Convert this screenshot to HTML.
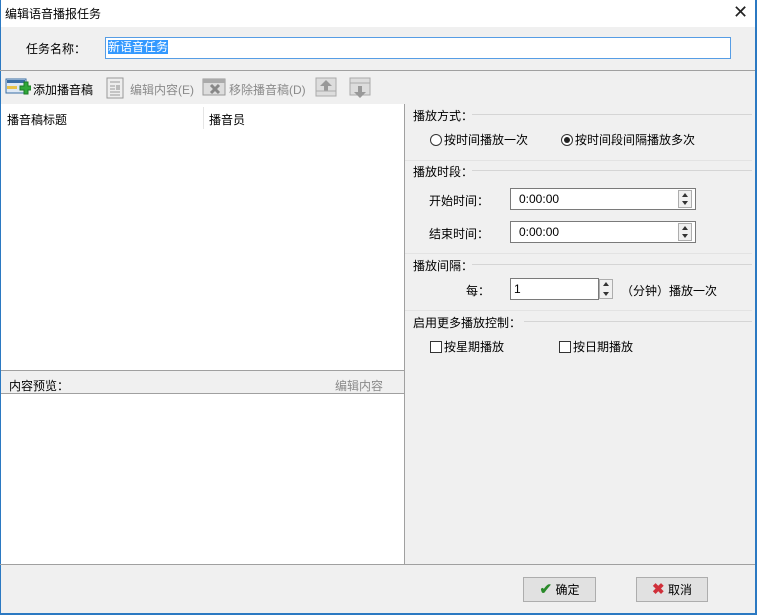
<!DOCTYPE html>
<html><head><meta charset="utf-8"><style>
*{margin:0;padding:0;box-sizing:border-box}
body{width:757px;height:615px;background:#f0f0f0;font-family:"Liberation Sans","Noto Sans CJK SC",sans-serif;font-size:12px;color:#000;position:relative;overflow:hidden}
.a{position:absolute;white-space:nowrap}
.ln{position:absolute;height:1px;background:#d5d5d5}
.inp{position:absolute;background:#fff;border:1px solid #7a7a7a;padding-left:8px;line-height:20px}
.spin{position:absolute;width:14px;border:1px solid #adadad;background:#f0f0f0}
.spin:before{content:"";position:absolute;left:3px;top:2px;border:3px solid transparent;border-bottom:4px solid #333;border-top:0}
.spin:after{content:"";position:absolute;left:3px;bottom:2px;border:3px solid transparent;border-top:4px solid #333;border-bottom:0}
.gray{color:#8a8a8a}
.rad{display:inline-block;width:12px;height:12px;border:1px solid #333;border-radius:50%;vertical-align:-2px;margin-right:2px;position:relative;background:#fff}
.chk{display:inline-block;width:12px;height:12px;border:1px solid #333;vertical-align:-2px;margin-right:2px;background:#fff}
.btn{position:absolute;border:1px solid #adadad;background:#e1e1e1;text-align:center;line-height:24px}
</style></head><body>
<div class="a" style="left:0;top:0;width:757px;height:27px;background:#fff"></div>
<div class="a" style="left:5px;top:5px">编辑语音播报任务</div>
<div class="a" style="left:733px;top:2px;font-size:18px;color:#222">✕</div>
<div class="a" style="left:0;top:0;width:1px;height:615px;background:#2b79c2"></div>
<div class="a" style="left:755px;top:0;width:2px;height:615px;background:#2b79c2"></div>
<div class="a" style="left:0;top:613px;width:757px;height:2px;background:#2b79c2"></div>
<div class="a" style="left:26px;top:40px">任务名称：</div>
<div class="inp" style="left:105px;top:37px;width:626px;height:22px;border-color:#569de5;padding-left:2px;line-height:19px"><span style="background:#3399ff;color:#fff">新语音任务</span></div>
<div class="a" style="left:0;top:70px;width:755px;height:1px;background:#a0a0a0"></div>
<svg class="a" style="left:5px;top:77px" width="26" height="22"><rect x="1" y="2" width="20" height="14" fill="#dfe9f5" stroke="#3a6ea5"/><rect x="2" y="3" width="18" height="3" fill="#3a6ea5"/><rect x="2" y="9" width="10" height="3" fill="#e8c34a"/><path d="M15 9h4v-4h4v4h3v4h-3v4h-4v-4h-4z" fill="#2fa83a" stroke="#1b7a25"/></svg>
<div class="a" style="left:33px;top:81px">添加播音稿</div>
<svg class="a" style="left:106px;top:77px" width="18" height="22"><rect x="1" y="1" width="16" height="20" fill="#eee" stroke="#999"/><path d="M4 5h10M4 9h5M4 12h5M4 15h10M4 18h10" stroke="#999"/><rect x="10" y="8" width="4" height="5" fill="#bbb"/></svg>
<div class="a gray" style="left:130px;top:81px">编辑内容(E)</div>
<svg class="a" style="left:202px;top:77px" width="24" height="22"><rect x="1" y="2" width="22" height="16" fill="#ddd" stroke="#999"/><rect x="1" y="2" width="22" height="4" fill="#aaa"/><path d="M9 8l8 8M17 8l-8 8" stroke="#888" stroke-width="3"/></svg>
<div class="a gray" style="left:229px;top:81px">移除播音稿(D)</div>
<svg class="a" style="left:315px;top:77px" width="22" height="20"><rect x="1" y="1" width="20" height="18" fill="#ddd" stroke="#aaa"/><path d="M11 3l-6 6h4v5h4v-5h4z" fill="#999"/><path d="M1 14h20" stroke="#aaa"/></svg>
<svg class="a" style="left:349px;top:77px" width="22" height="22"><rect x="1" y="1" width="20" height="17" fill="#ddd" stroke="#aaa"/><path d="M1 6h20" stroke="#aaa"/><path d="M11 21l-6-6h4v-6h4v6h4z" fill="#999"/></svg>
<div class="a" style="left:1px;top:104px;width:403px;height:267px;background:#fff"></div>
<div class="a" style="left:203px;top:107px;width:1px;height:22px;background:#e5e5e5"></div>
<div class="a" style="left:7px;top:111px">播音稿标题</div>
<div class="a" style="left:209px;top:111px">播音员</div>
<div class="a" style="left:1px;top:370px;width:403px;height:1px;background:#a0a0a0"></div>
<div class="a" style="left:9px;top:377px">内容预览：</div>
<div class="a gray" style="left:335px;top:377px">编辑内容</div>
<div class="a" style="left:1px;top:393px;width:403px;height:1px;background:#a0a0a0"></div>
<div class="a" style="left:1px;top:394px;width:403px;height:170px;background:#fff"></div>
<div class="a" style="left:404px;top:104px;width:1px;height:460px;background:#a0a0a0"></div>
<div class="a" style="left:0;top:564px;width:755px;height:1px;background:#a0a0a0"></div>
<div class="a" style="left:413px;top:107px">播放方式：</div>
<div class="ln" style="left:472px;top:114px;width:280px"></div>
<div class="a" style="left:430px;top:131px"><span class="rad"></span>按时间播放一次</div>
<div class="a" style="left:561px;top:131px"><span class="rad"><span style="position:absolute;left:2px;top:2px;width:6px;height:6px;border-radius:50%;background:#222"></span></span>按时间段间隔播放多次</div>
<div class="ln" style="left:405px;top:160px;width:347px;background:#e3e3e3"></div>
<div class="a" style="left:413px;top:163px">播放时段：</div>
<div class="ln" style="left:472px;top:170px;width:280px"></div>
<div class="a" style="left:429px;top:192px">开始时间：</div>
<div class="inp" style="left:510px;top:188px;width:186px;height:22px">0:00:00</div>
<div class="spin" style="left:678px;top:190px;height:18px"></div>
<div class="a" style="left:429px;top:225px">结束时间：</div>
<div class="inp" style="left:510px;top:221px;width:186px;height:22px">0:00:00</div>
<div class="spin" style="left:678px;top:223px;height:18px"></div>
<div class="ln" style="left:405px;top:253px;width:347px;background:#e3e3e3"></div>
<div class="a" style="left:413px;top:257px">播放间隔：</div>
<div class="ln" style="left:472px;top:264px;width:280px"></div>
<div class="a" style="left:466px;top:282px">每：</div>
<div class="inp" style="left:510px;top:278px;width:89px;height:22px;padding-left:3px">1</div>
<div class="spin" style="left:599px;top:279px;height:20px"></div>
<div class="a" style="left:621px;top:282px">（分钟）播放一次</div>
<div class="ln" style="left:405px;top:310px;width:347px;background:#e3e3e3"></div>
<div class="a" style="left:413px;top:314px">启用更多播放控制：</div>
<div class="ln" style="left:524px;top:321px;width:228px"></div>
<div class="a" style="left:430px;top:338px"><span class="chk"></span>按星期播放</div>
<div class="a" style="left:559px;top:338px"><span class="chk"></span>按日期播放</div>
<div class="btn" style="left:523px;top:577px;width:73px;height:25px"><span style="color:#2a8a2a;font-weight:bold;font-size:15px">✔</span> 确定</div>
<div class="btn" style="left:636px;top:577px;width:72px;height:25px"><span style="color:#d0303a;font-weight:bold;font-size:15px">✖</span> 取消</div>
</body></html>
